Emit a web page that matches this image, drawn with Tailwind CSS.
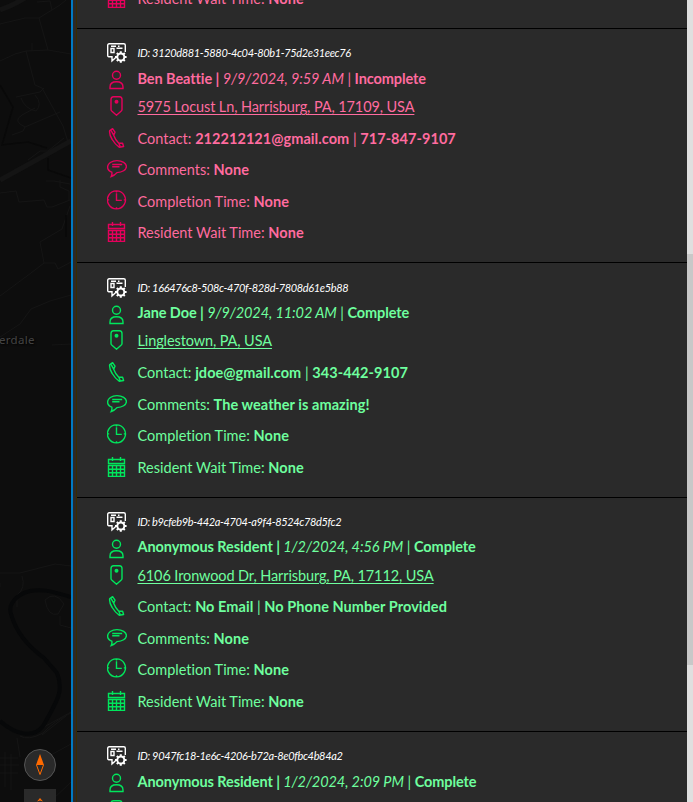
<!DOCTYPE html>
<html lang="en">
<head>
<meta charset="utf-8">
<title>Requests</title>
<script src="https://cdn.jsdelivr.net/npm/@tailwindcss/browser@4"></script>
</head>
<body class="bg-[#0d0d0d] h-[802px] overflow-hidden font-['Lato','Noto_Sans',sans-serif]">
<svg class="hidden">
  <symbol id="i-id" viewBox="0 0 20 20"><g fill="none" stroke="currentColor" stroke-width="1.4"><path d="M2.2 13.7H1.8Q.7 13.7.7 12.4V2.2Q.7.8 2.2.8H16.8Q18.3.8 18.3 2.2V9M2.2 13.7H5V18L8.5 14.8M4 5.5H7V9.5H4ZM4 3.2H9M9.5 5.2H15.5M11 3.2H12.5"/><circle cx="13.8" cy="14" r="3.5" stroke-width="1.9"/><path stroke-width="2" d="M13.8 8.2V10.4M13.8 17.6V19.8M8 14H10.2M17.4 14H19.6M9.8 10L11.2 11.4M16.4 16.6L17.8 18M17.8 10L16.4 11.4M11.2 16.6L9.8 18"/></g></symbol>
  <symbol id="i-user" viewBox="0 0 20 20"><g fill="none" stroke="currentColor" stroke-width="1.4"><circle cx="9.5" cy="5.3" r="4"/><path d="M3 18.5V17Q3 11.8 9.5 11.8T16 17V18.5Z"/></g></symbol>
  <symbol id="i-pin" viewBox="0 0 20 20"><path fill="none" stroke="currentColor" stroke-width="1.4" d="M6.5 .7H12.5Q15 .9 15 3.5V13.5Q15 14.5 14 15.3L9.5 19.2L5 15.3Q4 14.5 4 13.5V3.5Q4 .9 6.5 .7Z"/><circle cx="9.5" cy="5.8" r="2" fill="currentColor"/></symbol>
  <symbol id="i-phone" viewBox="0 0 20 20"><path fill="none" stroke="currentColor" stroke-width="1.4" stroke-linejoin="round" d="M5.6.7L2.7 2.5Q2 6.5 5.2 11.5Q8.2 16.5 12.2 19.2L16.6 18.5L15.6 15.2L11.8 15.3Q8.4 12 6.7 7.2L8 4.2ZM4 2.3L6.7 7.2M11.8 15.3L13.3 18.8"/></symbol>
  <symbol id="i-chat" viewBox="0 0 20 20"><path fill="none" stroke="currentColor" stroke-width="1.4" d="M4.2 17.5Q5.3 15.5 4.8 13.2C2.2 12.2.6 10.3.6 8.1C.6 4.4 4.8 1.6 10 1.6S19.4 4.3 19.4 7.6C19.4 11 15.2 13.3 10 13.6Q7.6 16.4 4.2 17.5ZM5.2 5.5H15.2M5.2 7.7H12.5"/></symbol>
  <symbol id="i-clock" viewBox="0 0 20 20"><path fill="none" stroke="currentColor" stroke-width="1.4" d="M9.5.9A9 9 0 1 1 9.4.9ZM9.5 3.2V10.4H14.8M9.5 1V2.5M9.5 17.3V19M.5 9.9H2.2M16.8 9.9H18.5"/></symbol>
  <symbol id="i-cal" viewBox="0 0 20 20"><path fill="none" stroke="currentColor" stroke-width="1.4" d="M1.5 2.5H17.5V6.5H1.5ZM5.5 0V4M13.5 0V4M1.5 8.5H17.5V19.4H1.5ZM5.5 8.5V19.4M9.5 8.5V19.4M13.5 8.5V19.4M1.5 12.2H17.5M1.5 15.8H17.5"/></symbol>
</svg>
<div class="flex h-[802px] w-[693px]">
  <aside class="relative w-[71px] shrink-0 overflow-hidden">
    <svg class="absolute inset-0" width="71" height="802" fill="none" stroke="#151515" stroke-width="1">
      <path stroke-width="5" stroke="#141414" d="M0 10Q14 5 25 -2M0 180L71 141"/>
      <path d="M0 24L25 18L39 18L60 5L66 0M37 2L50 1L52 10M39 18L48 50M0 61L15 54L26 51L48 50L71 54M26 51L35 85L42 88L63 126L68 142M32 43V50M16 97L40 92L44 88M21 98Q25 109 36 111Q43 104 35 95M12 135L23 131L25 127Q12 121 22 115L35 108M25 127L60 112M28 160L40 151H48L64 138M0 193L16 191L19 202L44 200L47 207H52L70 200M46 181H54L70 184M60 180V187L69 191V200M70 206L62 229L40 242L44 263H55L58 269L71 262M0 296L31 273L44 263M0 337L20 324L31 309L50 301L71 295M52 345L71 344M0 573H20L55 564L71 566M0 583V587M22 576Q26 588 17 595V607M45 600Q55 590 64 604L58 614Q48 617 45 600M60 616V625L71 628M20 736Q28 741 43 733Q54 721 71 713M44 727L71 712M42 735L66 716M0 758H18M0 765H19M0 773H18M5 752V787M11 754V790M17 738L20 757M50 802L71 782M49 756L71 744"/>
      <path stroke="#090909" stroke-width="1.5" d="M0 85L13 107L2 145L28 142L47 148M48 158V170L71 178M66 215V237"/>
      <path stroke="#070809" stroke-width="4" d="M71 597C48 590 40 589 30 591C15 595 8 605 11 614C17 636 33 650 44 658L57 673C64 690 58 700 43 726C34 738 17 736 0 721"/>
    </svg>
    <div class="absolute -left-[1px] top-[332px] font-['Noto_Sans',sans-serif] text-[11.5px] leading-[15px] tracking-[0.3px] text-[#444] [text-shadow:1px_1px_2px_#000]">erdale</div>
    <div class="absolute left-[24px] top-[749px] flex size-[32px] items-center justify-center rounded-full border border-[#555] bg-[#2a2a2a]">
      <svg width="10" height="22" viewBox="0 0 10 22"><path fill="#ff6a00" d="M5 0L9 11H1Z"/><path fill="none" stroke="#ff6a00" d="M1.5 11L5 20.5L8.5 11"/></svg>
    </div>
    <div class="absolute left-[24px] top-[789px] flex h-[32px] w-[32px] justify-center bg-[#2a2a2a] pt-[9px]">
      <svg width="8" height="10"><path fill="#ff6a00" d="M1 3.5L4 0L7 3.5L4 2.5Z"/></svg>
    </div>
  </aside>
  <main class="flex min-w-0 grow border-l-2 border-[#007ac2] bg-[#2a2a2a]">
    <div class="w-[4px] shrink-0 border-r border-[#3a2c00]"></div>
    <div id="list" class="-mt-[206.4px] grow overflow-hidden text-[14.5px] [font-variant-ligatures:none]"></div>
    <div class="flex w-[6px] shrink-0 flex-col bg-[#dfdfdf]"><div class="mt-[254px] h-[411px] bg-[#c8c8c8]"></div></div>
  </main>
</div>
<script>
const N = '<b>None</b>';
const data = [
  {c:0, com:N},
  {c:0, id:'3120d881-5880-4c04-80b1-75d2e31eec76', name:'Ben Beattie', date:'9/9/2024, 9:59 AM', st:'Incomplete', addr:'5975 Locust Ln, Harrisburg, PA, 17109, USA', contact:'<b>212212121@gmail.com</b> | <b>717-847-9107</b>', com:N},
  {c:1, id:'166476c8-508c-470f-828d-7808d61e5b88', name:'Jane Doe', date:'9/9/2024, 11:02 AM', st:'Complete', addr:'Linglestown, PA, USA', contact:'<b>jdoe@gmail.com</b> | <b>343-442-9107</b>', com:'<b>The weather is amazing!</b>'},
  {c:1, id:'b9cfeb9b-442a-4704-a9f4-8524c78d5fc2', name:'Anonymous Resident', date:'1/2/2024, 4:56 PM', st:'Complete', addr:'6106 Ironwood Dr, Harrisburg, PA, 17112, USA', contact:'<b>No Email</b> | <b>No Phone Number Provided</b>', com:N},
  {c:1, id:'9047fc18-1e6c-4206-b72a-8e0fbc4b84a2', name:'Anonymous Resident', date:'1/2/2024, 2:09 PM', st:'Complete'}
];
const row = (h, icon, text, shift, tc) => `<div class="flex items-center gap-[10.5px] ${h}"><svg class="size-[20px] shrink-0 ${shift}"><use href="#i-${icon}"/></svg><div class="whitespace-pre ${tc}">${text}</div></div>`;
document.getElementById('list').innerHTML = data.map(d => {
  const ic = d.c ? 'text-[#00e65c]' : 'text-[#e6005c]', tx = d.c ? 'text-[#6eff9e]' : 'text-[#ff6b9f]';
  const t = tx + ' [&_b]:tracking-[0.05px]', r = 'h-[31.5px]';
  const head = d.id ? row('h-[25px] text-white', 'id', `<i>ID: ${d.id}</i>`, '', 'text-[11px] tracking-[-0.35px]')
   + row('h-[25px]', 'user', `<b>${d.name} | </b><i>${d.date}</i> | <b>${d.st}</b>`, 'translate-y-[2px]', tx + ' tracking-[-0.09px]') : '<div class="h-[50px]"></div>';
  const place = d.addr || !d.id ? '' : row('h-[32px]', 'pin', '', '', tx);
  const mid = d.addr ? row('h-[32px]', 'pin', `<span class="underline underline-offset-2">${d.addr}</span>`, '-translate-y-[1px]', tx + ' tracking-[-0.11px]')
   + row(r, 'phone', `Contact: ${d.contact}`, '-translate-y-[1px]', t) : d.id ? place : '<div class="h-[63.5px]"></div>';
  const tail = d.com ? row(r, 'chat', `Comments: ${d.com}`, '-translate-y-[1px]', t)
   + row(r, 'clock', `Completion Time: ${N}`, '-translate-y-[2px]', t)
   + row(r, 'cal', `Resident Wait Time: ${N}`, '-translate-y-[1px]', t) : '';
  return `<section class="h-[234.33px] border-t border-black pl-[30px] pt-[12px] ${ic}">${head}${mid}${tail}</section>`;
}).join('');
</script>
</body>
</html>
